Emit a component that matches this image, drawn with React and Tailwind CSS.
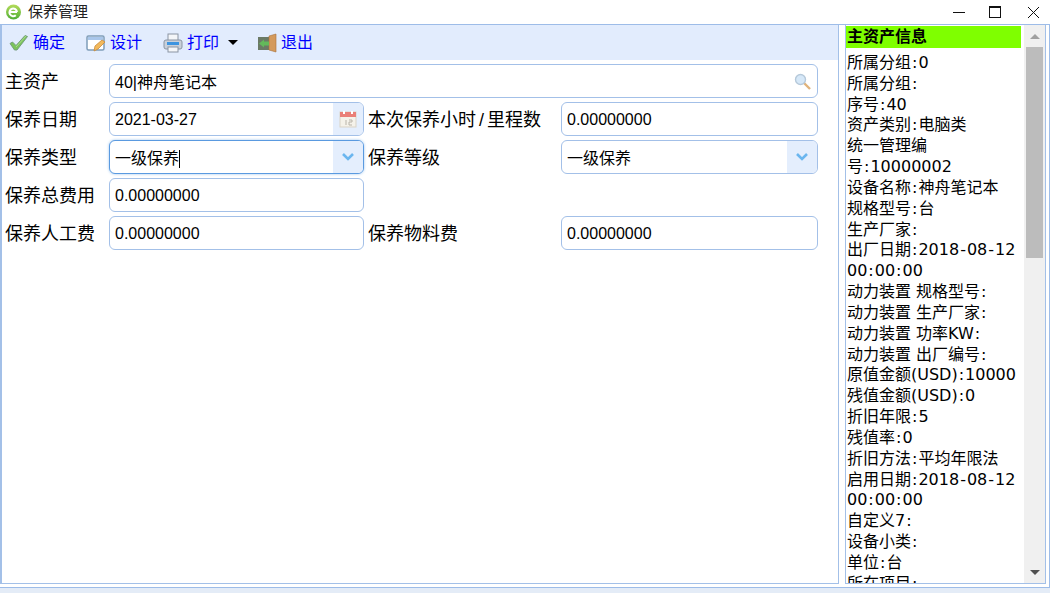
import React from 'react';

const sans = { fontFamily: '"Liberation Sans", "Noto Sans CJK SC", sans-serif' };

const sideLines = [
  '所属分组:0',
  '所属分组:',
  '序号:40',
  '资产类别:电脑类',
  '统一管理编号:10000002',
  '设备名称:神舟笔记本',
  '规格型号:台',
  '生产厂家:',
  '出厂日期:2018-08-12 00:00:00',
  '动力装置 规格型号:',
  '动力装置 生产厂家:',
  '动力装置 功率KW:',
  '动力装置 出厂编号:',
  '原值金额(USD):10000',
  '残值金额(USD):0',
  '折旧年限:5',
  '残值率:0',
  '折旧方法:平均年限法',
  '启用日期:2018-08-12 00:00:00',
  '自定义7:',
  '设备小类:',
  '单位:台',
  '所在项目:',
];

const CheckIcon = () => (
  <svg width="20" height="20" viewBox="0 0 20 20">
    <path d="M1 10.5l2.5-1.5 3.5 3.5 9-10 2.5 1-10.5 13.5h-2.5z" fill="#7cc45a" stroke="#6f9a78" strokeWidth="0.9" />
    <path d="M7 14l10-11" stroke="#b5e29a" strokeWidth="0.8" fill="none" />
  </svg>
);

const DesignIcon = () => (
  <svg width="20" height="20" viewBox="0 0 20 20">
    <rect x="1" y="3" width="17" height="14" rx="1.5" fill="#fff" stroke="#7f9db9" strokeWidth="1.5" />
    <rect x="2" y="4" width="15" height="3" fill="#a9c6ea" />
    <path d="M8 18l1-5 7-6 3 2-7 7z" fill="#f2b95c" stroke="#c98a3a" strokeWidth="0.8" />
  </svg>
);

const PrintIcon = () => (
  <svg width="20" height="20" viewBox="0 0 20 20">
    <rect x="5" y="1" width="10" height="7" fill="#f4f6f9" stroke="#8a94a3" />
    <rect x="1" y="7" width="18" height="9" rx="2" fill="#c9d0da" stroke="#8a94a3" />
    <rect x="4" y="9" width="12" height="3" fill="#3d94e0" />
    <rect x="5" y="14" width="10" height="5" fill="#f4f6f9" stroke="#8a94a3" />
  </svg>
);

const ExitIcon = () => (
  <svg width="20" height="20" viewBox="0 0 20 20">
    <rect x="1" y="4" width="12" height="13" fill="#6b7a66" />
    <path d="M12 3l7-2v18l-7-2z" fill="#d49a5c" stroke="#a8713a" strokeWidth="0.6" />
    <path d="M2 10.5l5-4v2h5v4h-5v2z" fill="#63b95a" />
  </svg>
);

// green "e" badge of the window
const LogoIcon = () => (
  <svg width="15" height="16" viewBox="0 0 15 16">
    <defs>
      <linearGradient id="logoGreen" x1="0" y1="0" x2="0" y2="1">
        <stop offset="0" stopColor="#b5dc5a" />
        <stop offset="1" stopColor="#4fae35" />
      </linearGradient>
    </defs>
    <circle cx="7.5" cy="8" r="7.5" fill="url(#logoGreen)" />
    <path d="M3.5 8h7.5M11 8a3.8 3.8 0 1 0-1.2 3.2" fill="none" stroke="#fff" strokeWidth="2" />
  </svg>
);

const ToolButton = ({ icon, label, className = '' }) => (
  <div className={`flex items-center gap-[4px] ${className}`}>
    {icon}
    <span className="text-[16px] text-[#0000ff]">{label}</span>
  </div>
);

const Field = ({ value, focused, cjk, addon, className = '' }) => (
  <div className={`flex h-[34px] overflow-hidden rounded-[6px] border bg-white ${focused ? 'border-[#5a9ae0] shadow-[0_0_3px_#9cc4ee]' : 'border-[#a3c0e8]'} ${className}`}>
    <div className={`flex flex-1 items-center pl-[5px] text-[16px] text-black whitespace-nowrap ${cjk ? 'pt-[4px]' : 'pt-[2px]'}`}>
      {value}
      {focused && <span className="h-[18px] w-px bg-black" />}
    </div>
    {addon}
  </div>
);

const ChevronAddon = () => (
  <div className="flex w-[30px] items-center justify-center bg-[#e4eefd]">
    <svg width="14" height="10" viewBox="0 0 14 10">
      <path d="M2 2l5 5 5-5" fill="none" stroke="#6bb6ef" strokeWidth="2.6" />
    </svg>
  </div>
);

const CalendarAddon = () => (
  <div className="flex w-[30px] items-center justify-center bg-[#e4eefd]">
    <svg width="18" height="18" viewBox="0 0 18 18">
      <rect x="1" y="2" width="16" height="15" fill="#f5f2ea" stroke="#d9d3c7" />
      <rect x="1" y="2" width="16" height="5" fill="#ea7f78" />
      <rect x="4" y="1" width="2" height="3" fill="#fff" />
      <rect x="12" y="1" width="2" height="3" fill="#fff" />
      <path d="M7 10v5M10 10h3v2h-3v3h3" fill="none" stroke="#b9b4aa" />
    </svg>
  </div>
);

const SearchAddon = () => (
  <div className="flex w-[30px] items-center justify-center">
    <svg width="17" height="17" viewBox="0 0 17 17">
      <path d="M10 10l6 6" stroke="#e0b27a" strokeWidth="2.4" />
      <circle cx="6.5" cy="6.5" r="5" fill="#d6e8f8" stroke="#b6c9da" strokeWidth="1.4" />
    </svg>
  </div>
);

const Label = ({ children, className = '' }) => (
  <div className={`h-[34px] text-[18px] leading-[36px] text-black whitespace-nowrap ${className}`}>{children}</div>
);

// colons and hyphens run wider in the reference than in DejaVu
const SideLine = ({ text }) => (
  <div>
    {text.split(/([:-])/).map((part, i) =>
      part === ':' || part === '-' ? <span key={i} className="px-[1px]">{part}</span> : part
    )}
  </div>
);

const App = () => {
  return (
    <div className="flex h-[598px] w-[1050px] flex-col overflow-hidden bg-white" style={sans}>
      {/* Title bar */}
      <div className="flex h-[24px] shrink-0 items-center pl-[6px]">
        <LogoIcon />
        <span className="ml-[7px] text-[15px] text-[#222]">保养管理</span>
        <div className="ml-auto flex items-center">
          <svg className="mr-[24px]" width="12" height="12" viewBox="0 0 12 12"><path d="M0 6.5h12" stroke="#111" /></svg>
          <svg className="mr-[26px]" width="12" height="12" viewBox="0 0 12 12"><rect x="0.5" y="0.5" width="11" height="11" fill="none" stroke="#111" /><path d="M0 1.5h12" stroke="#111" /></svg>
          <svg className="mr-[10px]" width="13" height="13" viewBox="0 0 13 13"><path d="M1 1l11 11M12 1l-11 11" stroke="#111" /></svg>
        </div>
      </div>

      {/* Window body */}
      <div className="flex h-[564px] shrink-0 border-y border-r border-[#9dbce8] bg-white pb-[3px] pr-[3px]">
        {/* Main panel */}
        <div className="flex w-[839px] shrink-0 flex-col border-b border-l-2 border-r border-[#a3c0e8]">
          <div className="flex h-[35px] shrink-0 items-center bg-[#e2ecfd] pl-[7px]">
            <ToolButton icon={<CheckIcon />} label="确定" />
            <ToolButton icon={<DesignIcon />} label="设计" className="ml-[21px]" />
            <ToolButton icon={<PrintIcon />} label="打印" className="ml-[21px]" />
            <div className="ml-[9px] h-0 w-0 border-x-[5px] border-t-[5px] border-x-transparent border-t-black" />
            <ToolButton icon={<ExitIcon />} label="退出" className="ml-[19px]" />
          </div>

          <div className="grid grid-cols-[104px_255px_197px_257px] gap-y-[4px] pl-[3px] pt-[4px]">
            <Label>主资产</Label>
            <Field value="40|神舟笔记本" cjk addon={<SearchAddon />} className="col-span-3" />

            <Label>保养日期</Label>
            <Field value="2021-03-27" addon={<CalendarAddon />} />
            <Label className="pl-[4px]">本次保养小时<span className="px-[3px]">/</span>里程数</Label>
            <Field value="0.00000000" />

            <Label>保养类型</Label>
            <Field value="一级保养" cjk focused addon={<ChevronAddon />} />
            <Label className="pl-[4px]">保养等级</Label>
            <Field value="一级保养" cjk addon={<ChevronAddon />} />

            <Label>保养总费用</Label>
            <Field value="0.00000000" />
            <div className="col-span-2" />

            <Label>保养人工费</Label>
            <Field value="0.00000000" />
            <Label className="pl-[4px]">保养物料费</Label>
            <Field value="0.00000000" />
          </div>
        </div>

        {/* Asset info panel */}
        <div className="ml-[6px] flex min-w-0 flex-1 border-x border-b border-[#a3c0e8]">
          <div className="min-w-0 flex-1 overflow-hidden pr-[3px] pt-[1px]" style={{ fontFamily: '"DejaVu Sans", "Noto Sans CJK SC", sans-serif' }}>
            <div className="h-[22px] bg-[#7fff00] pl-[1px] text-[16px] font-bold leading-[22px] text-black">主资产信息</div>
            <div className="pl-[1px] pt-[5px] text-[16px] leading-[20.83px] text-black">
              {sideLines.map((line, i) => (
                <SideLine key={i} text={line} />
              ))}
            </div>
          </div>
          <div className="flex w-[21px] shrink-0 flex-col bg-[#f0f0f0]">
            <div className="flex h-[22px] items-center justify-center">
              <div className="h-0 w-0 border-x-[5px] border-b-[5px] border-x-transparent border-b-[#a0a0a0]" />
            </div>
            <div className="mx-[2px] h-[211px] bg-[#bcbcbc]" />
            <div className="mt-auto flex h-[22px] items-center justify-center">
              <div className="h-0 w-0 border-x-[5px] border-t-[5px] border-x-transparent border-t-[#505050]" />
            </div>
          </div>
        </div>
      </div>

      <div className="h-[5px] shrink-0 bg-[#e4ecf7]" />
    </div>
  );
};

export default App;
